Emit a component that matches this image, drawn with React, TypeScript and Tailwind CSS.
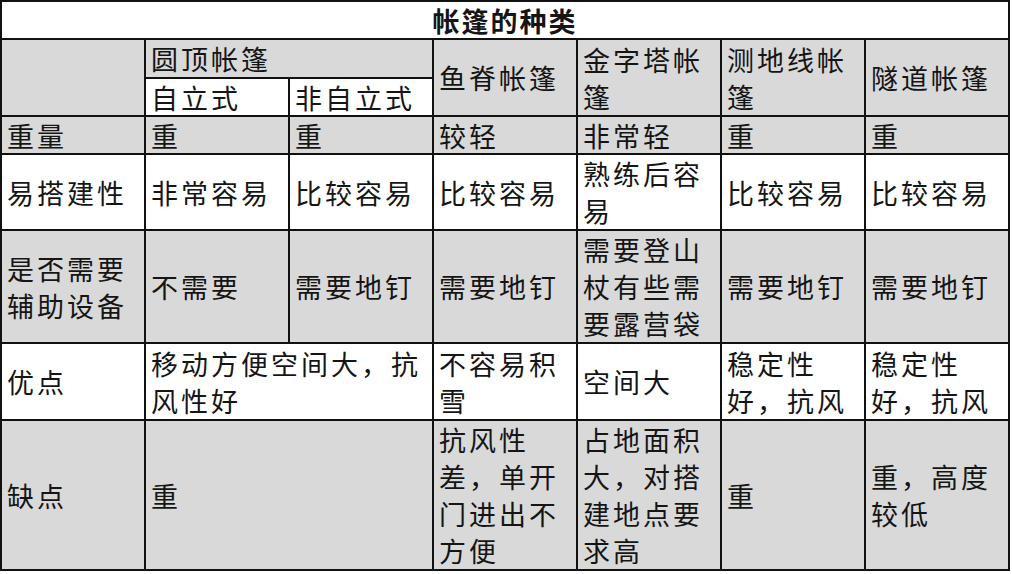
const gray = 'bg-[#d9d9d9]';
const white = 'bg-white';

type CellProps = {
  children?: React.ReactNode;
  bg: string;
  className?: string;
};

const Cell = ({ children, bg, className = '' }: CellProps) => (
  <div className={`${bg} flex items-center pl-[5px] pr-[2px] ${className}`}>
    <div className="w-full">{children}</div>
  </div>
);

const rows: { bg: string; cells: string[] }[] = [
  { bg: gray, cells: ['重量', '重', '重', '较轻', '非常轻', '重', '重'] },
  { bg: white, cells: ['易搭建性', '非常容易', '比较容易', '比较容易', '熟练后容易', '比较容易', '比较容易'] },
  {
    bg: gray,
    cells: ['是否需要辅助设备', '不需要', '需要地钉', '需要地钉', '需要登山杖有些需要露营袋', '需要地钉', '需要地钉'],
  },
];

const App = () => {
  return (
    <div className="w-[1012px] h-[574px] bg-white">
      <div
        className="grid w-[1010px] bg-[#111] p-[2px] gap-[2px] text-[27px] leading-[37px] tracking-[3px] text-[#151515] grid-cols-[142px_142px_142px_142px_142px_142px_142px] grid-rows-[36px_37px_36px_36px_74px_111px_75px_148px]"
        style={{ fontFamily: '"Noto Sans CJK SC", "Noto Sans", sans-serif' }}
      >
        <div className="col-span-7 bg-white flex items-center justify-center text-[27px] font-bold tracking-[2px]">
          帐篷的种类
        </div>

        <div className={`${gray} row-span-2`} />
        <Cell bg={gray} className="col-span-2">圆顶帐篷</Cell>
        <Cell bg={gray} className="row-span-2">鱼脊帐篷</Cell>
        <Cell bg={gray} className="row-span-2">金字塔帐篷</Cell>
        <Cell bg={gray} className="row-span-2">测地线帐篷</Cell>
        <Cell bg={gray} className="row-span-2">隧道帐篷</Cell>
        <Cell bg={white}>自立式</Cell>
        <Cell bg={white}>非自立式</Cell>

        {rows.map((row) =>
          row.cells.map((text, i) => (
            <Cell key={row.cells[0] + i} bg={row.bg}>
              {text}
            </Cell>
          ))
        )}

        <Cell bg={white}>优点</Cell>
        <Cell bg={white} className="col-span-2">移动方便空间大，抗风性好</Cell>
        <Cell bg={white}>不容易积雪</Cell>
        <Cell bg={white}>空间大</Cell>
        <Cell bg={white}>稳定性好，抗风</Cell>
        <Cell bg={white}>稳定性好，抗风</Cell>

        <Cell bg={gray}>缺点</Cell>
        <Cell bg={gray} className="col-span-2">重</Cell>
        <Cell bg={gray}>抗风性差，单开门进出不方便</Cell>
        <Cell bg={gray}>占地面积大，对搭建地点要求高</Cell>
        <Cell bg={gray}>重</Cell>
        <Cell bg={gray}>重，高度较低</Cell>
      </div>
    </div>
  );
};

export default App;
